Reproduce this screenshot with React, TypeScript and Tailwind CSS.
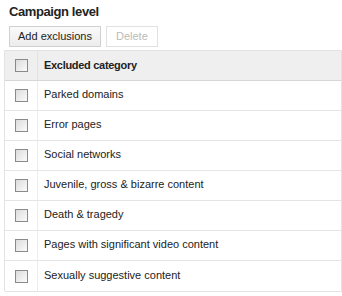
import React from "react";

const rows = [
  "Parked domains",
  "Error pages",
  "Social networks",
  "Juvenile, gross & bizarre content",
  "Death & tragedy",
  "Pages with significant video content",
  "Sexually suggestive content",
];

function Box() {
  return (
    <span className="block w-[13px] h-[13px] border border-[#8a8a8a] bg-gradient-to-br from-[#dcdcdc] to-[#fbfbfb]" />
  );
}

export default function App() {
  return (
    <div className="w-[342px] h-[296px] bg-white font-['Liberation_Sans',Arial,sans-serif] text-[#222] overflow-hidden">
      <div className="pl-[9px] pt-[2px] text-[13px] font-bold tracking-[-0.4px] text-[#222] leading-[19px]">Campaign level</div>
      <div className="flex gap-[5px] pl-[9px] mt-[5px]">
        <button className="h-[21px] px-[8px] border border-[#d0d0d0] bg-gradient-to-b from-[#fafafa] to-[#ececec] text-[11px] text-[#222] leading-none">
          Add exclusions
        </button>
        <button className="h-[21px] px-[9px] border border-[#e2e2e2] bg-white text-[11px] text-[#bbb] leading-none">
          Delete
        </button>
      </div>
      <div className="mt-[3px] ml-[4px] border border-[#e3e3e3] rounded-bl-[2px]">
        <div className="flex h-[30px] bg-[#efefef] border-b border-[#d6d6d6]">
          <div className="w-[33px] flex items-center justify-center border-r border-[#e2e2e2]">
            <Box />
          </div>
          <div className="flex items-center pl-[6px] text-[11px] font-bold tracking-[-0.3px] text-[#222]">Excluded category</div>
        </div>
        {rows.map((r, i) => (
          <div key={i} className={"flex h-[30px] " + (i < rows.length - 1 ? "border-b border-[#e5e5e5]" : "")}>
            <div className="w-[33px] flex items-center justify-center border-r border-[#ececec]">
              <Box />
            </div>
            <div className="flex items-center pl-[6px] pb-[2px] text-[11px] text-[#222]">{r}</div>
          </div>
        ))}
      </div>
    </div>
  );
}
